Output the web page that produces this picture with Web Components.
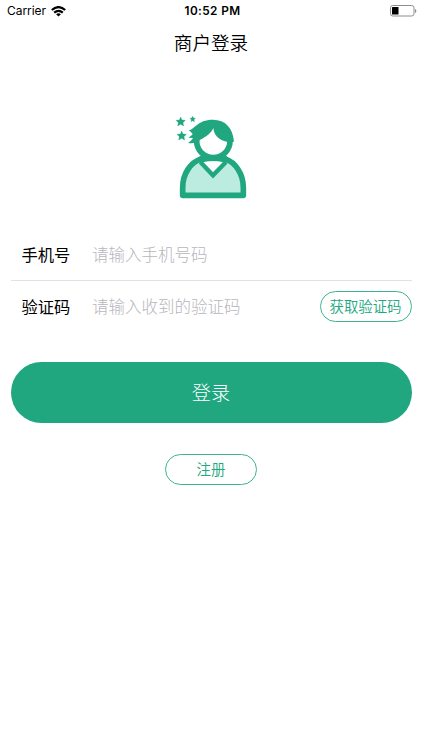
<!DOCTYPE html>
<html lang="zh-CN">
<head>
<meta charset="utf-8">
<title>商户登录</title>
<style>
    body {
        margin: 0;
        background: #fff;
        color: #000;
        font-family: Inter, "Noto Sans CJK SC", sans-serif;
    }
</style>
</head>
<body>
<login-page></login-page>

<script>
const define = (name, html) => {
    const template = document.createElement("template");
    template.innerHTML = html;

    customElements.define(name, class extends HTMLElement {
        constructor() {
            super();
            this.attachShadow({ mode: "open" });
            this.shadowRoot.appendChild(template.content.cloneNode(true));
        }
    });
};

define("status-bar", `
<style>
    :host {
        display: grid;
        grid-template-columns: 1fr auto 1fr;
        align-items: center;
        height: 22px;
        padding: 0 5px 0 7px;
        box-sizing: border-box;
        font-size: 12px;
        line-height: 22px;
    }
    .carrier {
        display: flex;
        align-items: center;
        gap: 5px;
        letter-spacing: -0.05px;
    }
    .time {
        font-size: 11.8px;
        font-weight: 600;
        letter-spacing: 0.4px;
        padding-left: 1px;
    }
    .battery {
        justify-self: end;
        display: block;
    }
    .wifi {
        display: block;
    }
</style>
<div class="carrier">
    <span>Carrier</span>
    <svg class="wifi" width="15" height="11" viewBox="0 0 15 11">
        <g fill="none" stroke="#000" stroke-width="2.2">
            <path d="M0.800 4 Q7.500 -1.800 14.200 4"/>
            <path d="M3.200 6.700 Q7.500 3 11.800 6.700"/>
        </g>
        <path d="M5.100 8.300 Q7.500 6.400 9.900 8.300 L7.500 10.600z"/>
    </svg>
</div>
<span class="time">10:52 PM</span>
<svg class="battery" width="27" height="12" viewBox="0 0 27 12">
    <rect x="0.5" y="0.5" width="23.5" height="10.5" rx="2.3" fill="none" stroke="#8e8e8e"/>
    <rect x="2" y="2" width="6.5" height="7.500" rx="0.6"/>
    <path d="M25 4v4q1.4-.6 1.4-2T25 4z" fill="#8e8e8e"/>
</svg>
`);

define("nav-title", `
<style>
    :host {
        display: block;
        height: 42px;
        line-height: 42px;
        font-size: 18.6px;
        font-weight: 350;
        text-align: center;
    }
</style>
<slot></slot>
`);

define("merchant-avatar", `
<style>
    :host {
        display: flex;
        justify-content: center;
        padding: 41px 0 24px 2px;
    }
    svg {
        display: block;
    }
</style>
<svg width="95" height="100" viewBox="0 0 285 300">
    <path d="M54 270 V250 C54 205 78 170 108 165 H180 C210 170 235 205 235 250 V270z" fill="#bcebdf"/>
    <path d="M109 169 L144 208 L180 169z" fill="#fff"/>
    <path d="M106 171 L144 211 L183 171" fill="none" stroke="#20a780" stroke-width="13"/>
    <path d="M110 161 C76 172 53 207 53 248 V271 H235 V248 C235 207 212 172 179 161" fill="none" stroke="#20a780" stroke-width="17" stroke-linejoin="round"/>
    <path d="M103 155 L112 148 H178 L187 155 L190 172 H176 Q145 164 113 172 H98z" fill="#20a780"/>
    <circle cx="145" cy="108" r="50" fill="#fff" stroke="#20a780" stroke-width="17"/>
    <path d="M71 75 C88 75 96 44 144 44 C181 44 204 69 207 110 C188 116 146 103 145 69 C139 84 125 94 104 105 C97 113 84 117 69 114 C77 109 81 104 84 99 L70 98 C77 94 80 91 83 87 C79 82 75 78 71 75z" fill="#20a780"/>
    <g fill="#20a780" stroke="#20a780" stroke-linejoin="round">
        <path d="M47 36l4 9 10 1-7 7 2 10-9-5-9 5 2-10-7-7 10-1z"/>
        <path d="M50 78l4 9 10 1-7 7 2 10-9-5-9 5 2-10-7-7 10-1z"/>
        <path d="M83 34l2.500 5 5.500 1-4 4 1 6-5-3-5 3 1-6-4-4 5.500-1z"/>
    </g>
</svg>
`);

define("form-row", `
<style>
    :host {
        display: flex;
        align-items: center;
        height: 51px;
        padding-left: 11px;
        font-size: 16.5px;
    }
    .label {
        width: 70.5px;
        margin-bottom: 2px;
        font-size: 16.3px;
        font-weight: 400;
    }
    .hint {
        flex: 1;
        margin-bottom: 2px;
        font-weight: 300;
        color: #b6b6bc;
    }
</style>
<span class="label"><slot name="label"></slot></span>
<span class="hint"><slot></slot></span>
<slot name="action"></slot>
`);

define("outline-button", `
<style>
    :host {
        display: block;
        box-sizing: border-box;
        width: 92px;
        height: 31px;
        border: 1px solid #3fb394;
        border-radius: 16px;
        color: #20a780;
        font-size: 14.4px;
        font-weight: 350;
        line-height: 29px;
        text-align: center;
    }
</style>
<slot></slot>
`);

define("primary-button", `
<style>
    :host {
        display: block;
        height: 61px;
        border-radius: 31px;
        background: #20a780;
        color: #fff;
        font-size: 19.2px;
        font-weight: 300;
        line-height: 62px;
        text-align: center;
    }
</style>
<slot></slot>
`);

define("login-page", `
<style>
    :host {
        display: block;
        height: 750px;
        overflow: hidden;
    }
    .form {
        display: flex;
        flex-direction: column;
        margin: 0 10.5px;
    }
    .line {
        height: 1px;
        background: #e2e2e4;
    }
    primary-button {
        margin-top: 30px;
    }
    .register {
        align-self: center;
        margin-top: 31px;
    }
</style>
<status-bar></status-bar>
<nav-title>商户登录</nav-title>
<merchant-avatar></merchant-avatar>
<div class="form">
    <form-row>
        <span slot="label">手机号</span>
        请输入手机号码
    </form-row>
    <div class="line"></div>
    <form-row>
        <span slot="label">验证码</span>
        请输入收到的验证码
        <outline-button slot="action">获取验证码</outline-button>
    </form-row>
    <primary-button>登录</primary-button>
    <outline-button class="register">注册</outline-button>
</div>
`);
</script>
</body>
</html>
